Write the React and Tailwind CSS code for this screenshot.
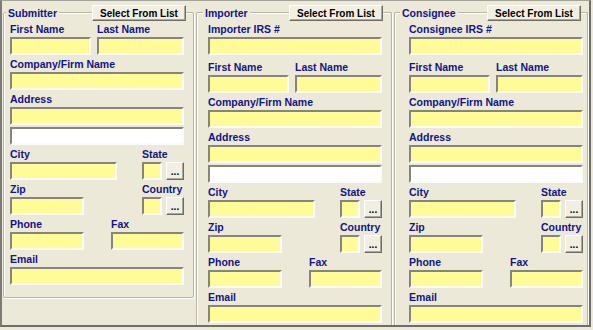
import React from "react";

const font = { fontFamily: '"Liberation Sans", Arial, sans-serif' };

const Label = ({ children, className = "" }) => (
  <div
    className={`h-[17px] pt-[1px] leading-[16px] text-[10.5px] font-bold text-[#101488] whitespace-nowrap ${className}`}
  >
    {children}
  </div>
);

const Input = ({ className = "", white }) => (
  <div
    className={`h-[18px] border-2 border-t-[#85857d] border-l-[#85857d] border-b-[#fbfbf7] border-r-[#fbfbf7] ${
      white ? "bg-white" : "bg-[#fffb96]"
    } ${className}`}
  />
);

const Dots = () => (
  <button className="w-[18px] h-[18px] flex items-center justify-center pt-[2px] bg-[#f1efe4] border border-t-white border-l-white border-b-[#6f6d62] border-r-[#6f6d62] shadow-[inset_-1px_-1px_0_#aca899] text-[10px] font-bold leading-[10px] text-black">
    ...
  </button>
);

const Field = ({ label, w = "w-[174px]", white }) => (
  <div>
    <Label>{label}</Label>
    <Input className={w} white={white} />
  </div>
);

const PickField = ({ label }) => (
  <div className="w-[42px]">
    <Label>{label}</Label>
    <div className="flex gap-[4px]">
      <Input className="w-[20px]" />
      <Dots />
    </div>
  </div>
);

const Address = () => (
  <>
    <div className="flex gap-[6px]">
      <Field label="First Name" w="w-[81px]" />
      <Field label="Last Name" w="w-[87px]" />
    </div>
    <Field label="Company/Firm Name" />
    <div>
      <Label>Address</Label>
      <Input className="w-[174px]" />
      <Input className="w-[174px] mt-[2px]" white />
    </div>
    <div className="flex gap-[25px]">
      <Field label="City" w="w-[107px]" />
      <PickField label="State" />
    </div>
    <div className="flex gap-[58px]">
      <Field label="Zip" w="w-[74px]" />
      <PickField label="Country" />
    </div>
    <div className="flex gap-[27px]">
      <Field label="Phone" w="w-[74px]" />
      <Field label="Fax" w="w-[73px]" />
    </div>
    <Field label="Email" />
  </>
);

const Group = ({ title, className, titleClass, btnClass, bodyClass, children }) => (
  <div
    className={`mt-[11px] border border-[#b7b4a5] rounded-[2px] shadow-[inset_1px_1px_0_#ffffff,1px_1px_0_#ffffff] ${className}`}
  >
    <div className="-mt-[8px] h-[16px] flex items-center justify-between">
      <div
        className={`bg-[#ECE9D8] px-[2px] text-[10.5px] font-bold text-[#101488] leading-[14px] ${titleClass}`}
      >
        {title}
      </div>
      <button
        className={`w-[94px] h-[16px] bg-[#f1efe4] border border-t-white border-l-white border-b-[#6f6d62] border-r-[#6f6d62] shadow-[inset_-1px_-1px_0_#aca899] text-[10px] font-bold leading-[13px] text-black ${btnClass}`}
      >
        Select From List
      </button>
    </div>
    <div className={`-mt-[1px] ${bodyClass}`}>{children}</div>
  </div>
);

export default function App() {
  return (
    <div style={font} className="w-[593px] h-[330px] bg-[#ECE9D8] overflow-hidden">
      <div className="w-[591px] h-[327px] border-l-2 border-t border-r-2 border-b-2 border-l-[#7c7c74] border-t-[#a3a39b] border-r-[#6e6e66] border-b-[#6e6e66] flex pl-[1px] gap-[2px] overflow-hidden">
        <Group
          title="Submitter"
          className="w-[191px] h-[286px]"
          titleClass="ml-[2px]"
          btnClass="mr-[7px]"
          bodyClass="pl-[6px]"
        >
          <Address />
        </Group>
        <Group
          title="Importer"
          className="w-[196px] h-[330px] border-b-0"
          titleClass="ml-[6px]"
          btnClass="mr-[8px]"
          bodyClass="pl-[11px]"
        >
          <Field label="Importer IRS #" />
          <div className="h-[3px]" />
          <Address />
        </Group>
        <Group
          title="Consignee"
          className="w-[194px] h-[330px] border-b-0"
          titleClass="ml-[5px]"
          btnClass="mr-[6px]"
          bodyClass="pl-[14px]"
        >
          <Field label="Consignee IRS #" />
          <div className="h-[3px]" />
          <Address />
        </Group>
      </div>
    </div>
  );
}
